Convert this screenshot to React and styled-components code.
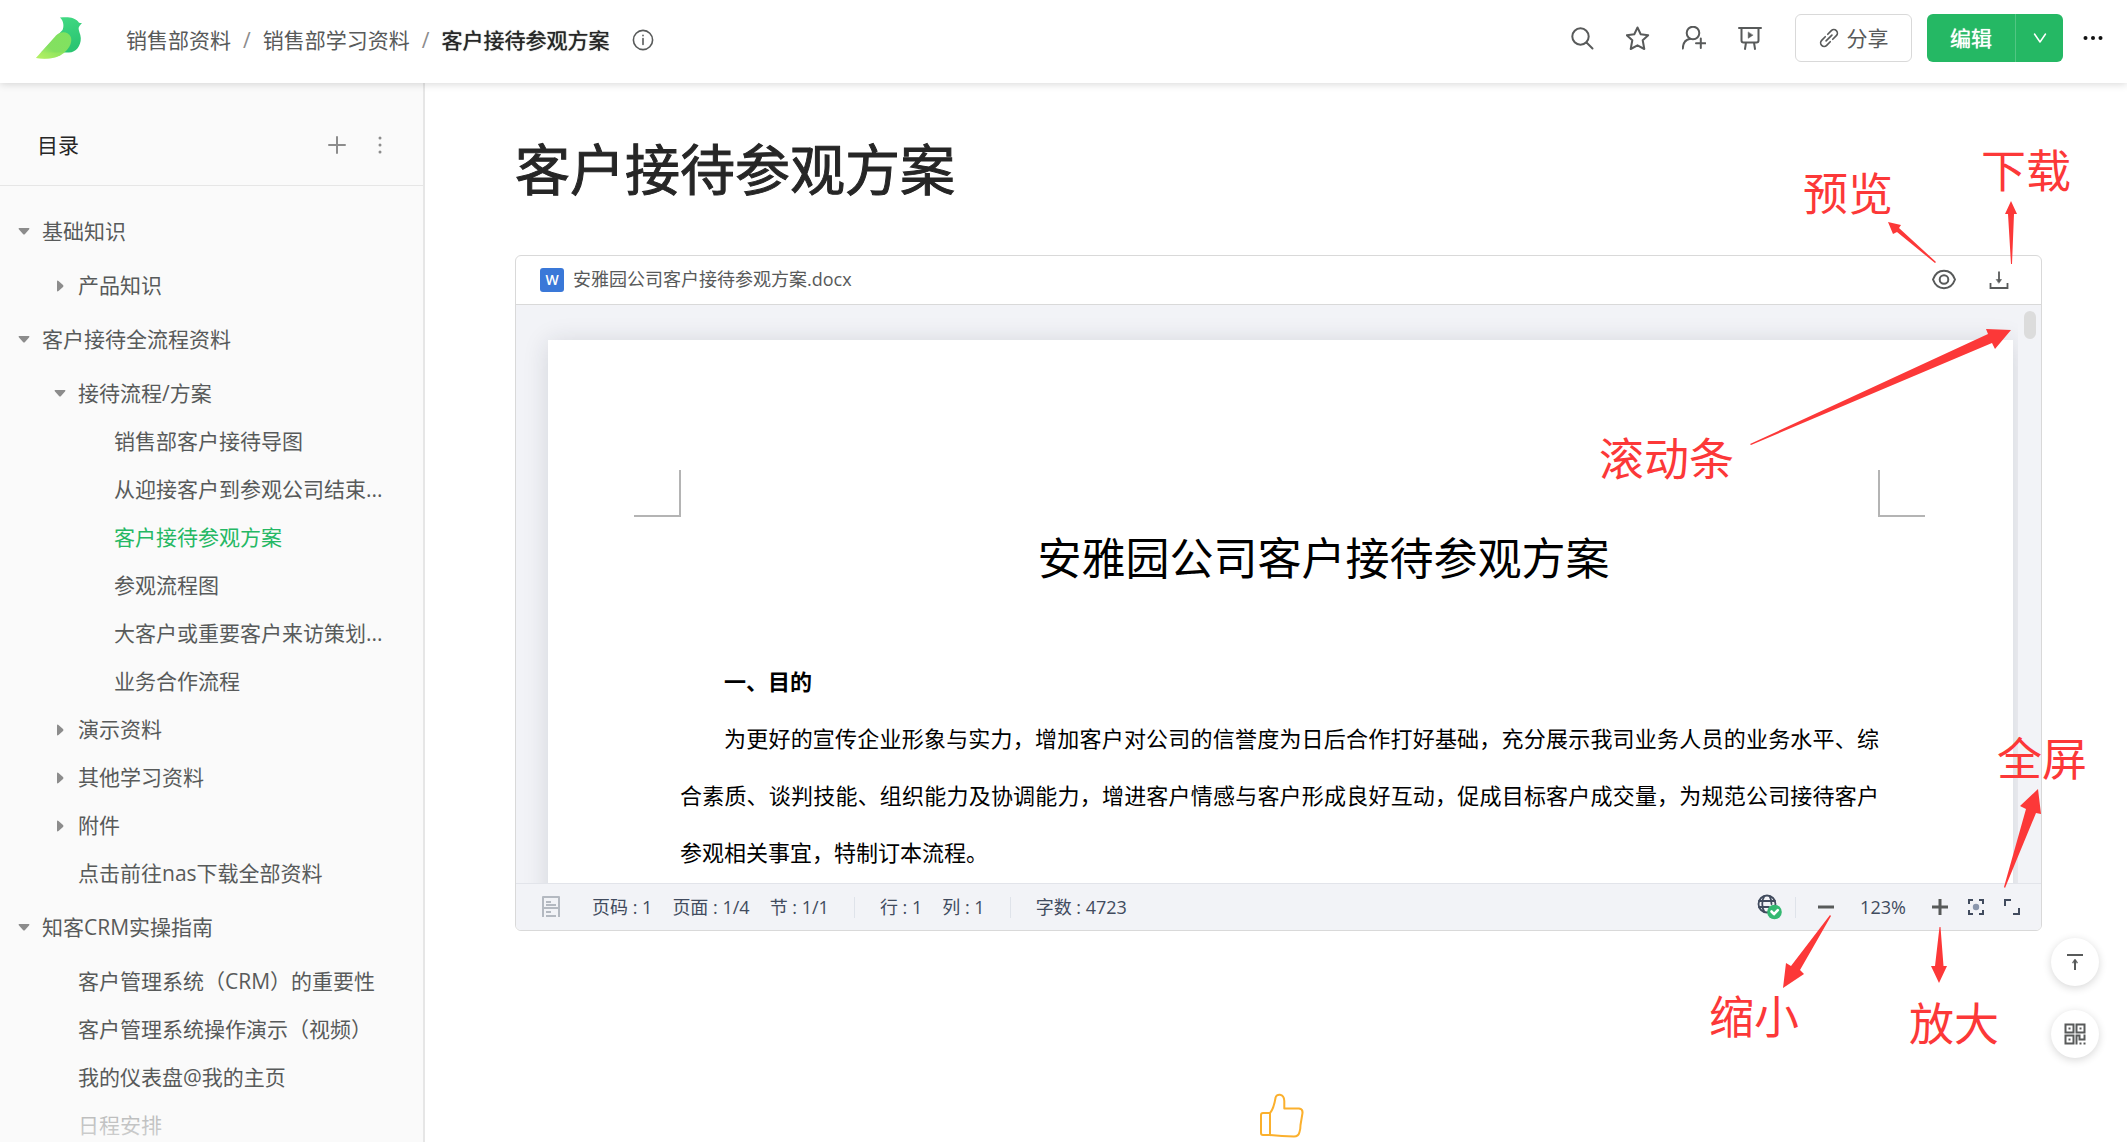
import React from 'react';
import styled, { createGlobalStyle, css } from 'styled-components';

const color = {
  ink: '#262626',
  text: '#585a5a',
  muted: '#8c8c8c',
  line: '#d9d9d9',
  green: '#25b864',
  red: '#fc3838',
  slate: '#414b5e',
  panel: '#f2f3f7',
};

const GlobalStyle = createGlobalStyle`
  *, *::before, *::after { box-sizing: border-box; }
  body {
    margin: 0;
    background: #fff;
    color: ${color.text};
    font-family: "Open Sans", "Noto Sans CJK SC", sans-serif;
    font-size: 21px;
    line-height: 32px;
  }
  a { color: inherit; text-decoration: none; }
  button { font: inherit; color: inherit; background: none; border: 0; padding: 0; cursor: pointer; }
  ul { list-style: none; margin: 0; padding: 0; }
  svg { display: block; flex: none; }
`;

const App = styled.div`
  position: relative;
  display: flex;
  flex-direction: column;
  height: 100vh;
  overflow: hidden;
`;

/* ---------- header ---------- */

const Header = styled.header`
  position: relative;
  z-index: 2;
  flex: none;
  display: flex;
  align-items: center;
  height: 83px;
  padding: 0 22px 7px 36px;
  background: #fff;
  box-shadow: 0 1px 8px rgba(0, 0, 0, 0.16);
`;

const Breadcrumb = styled.nav`
  display: flex;
  align-items: center;
  gap: 12px;
  flex: 1;
  min-width: 0;
  margin-left: 42px;
  padding-top: 3px;
  white-space: nowrap;
`;

const Slash = styled.span`
  color: ${color.muted};
`;

const Current = styled.a`
  margin-right: 10px;
  color: ${color.ink};
  text-shadow: 0 0 1px ${color.ink};
`;

const IconButton = styled.button`
  display: flex;
  align-items: center;
  justify-content: center;
  min-width: 24px;
  height: 24px;
  color: ${(p) => p.$tone || color.text};
`;

const Tools = styled.div`
  display: flex;
  align-items: center;
  gap: 32px;
`;

const ShareButton = styled.button`
  display: flex;
  align-items: center;
  justify-content: center;
  gap: 8px;
  width: 117px;
  height: 48px;
  margin: 0 15px 0 33px;
  border: 1px solid ${color.line};
  border-radius: 6px;
`;

const EditGroup = styled.div`
  display: flex;
  height: 48px;
  margin-right: 18px;
  border-radius: 6px;
  overflow: hidden;
  background: ${color.green};
  color: #fff;
`;

const EditButton = styled.button`
  display: flex;
  align-items: center;
  justify-content: center;
  width: 88px;
  text-shadow: 0 0 1px #fff;
`;

const EditMore = styled(EditButton)`
  width: 48px;
  border-left: 1px solid #51c683;
`;

/* ---------- sidebar ---------- */

const Body = styled.div`
  flex: 1;
  display: flex;
  min-height: 0;
`;

const Sidebar = styled.aside`
  position: relative;
  flex: none;
  width: 425px;
  overflow: hidden;
  background: #fafafa;
  border-right: 2px solid #e6e6e6;

  &::after {
    content: '';
    position: absolute;
    inset: auto 0 0 0;
    height: 50px;
    background: linear-gradient(rgba(250, 250, 250, 0), rgba(250, 250, 250, 0.6) 40%, rgba(250, 250, 250, 0.75));
    pointer-events: none;
  }
`;

const SidebarHead = styled.div`
  display: flex;
  align-items: center;
  gap: 19px;
  height: 103px;
  padding: 22px 31px 0 37px;
  border-bottom: 1px solid #e6e6e6;
`;

const SidebarTitle = styled.h2`
  flex: 1;
  margin: 0;
  color: ${color.ink};
  font-size: 21px;
  font-weight: 400;
`;

const Tree = styled.ul`
  padding: 16px 0 0;
`;

const TreeItem = styled.li`
  display: flex;
  align-items: center;
  height: ${(p) => (p.$level === 0 ? 60 : 48)}px;
  padding-left: ${(p) => 12 + p.$level * 36}px;
  white-space: nowrap;
  ${(p) => p.$active && css`color: ${color.green};`}
`;

const Toggle = styled.button`
  display: flex;
  align-items: center;
  justify-content: center;
  width: 24px;
  height: 24px;
  color: ${color.muted};
`;

const Spacer = styled.span`
  width: 24px;
`;

const TreeLink = styled.a`
  margin-left: 6px;
  padding-bottom: 2px;
`;

/* ---------- article ---------- */

const Main = styled.main`
  flex: 1;
  min-width: 0;
  display: flex;
  flex-direction: column;
  padding: 50px 85px 0 90px;
`;

const Title = styled.h1`
  flex: none;
  margin: 0 0 50px;
  color: ${color.ink};
  font-size: 55px;
  font-weight: 400;
  line-height: 72px;
  -webkit-text-stroke: 1px ${color.ink};
`;

const Card = styled.section`
  flex: none;
  border: 1px solid ${color.line};
  border-radius: 6px;
  overflow: hidden;
`;

const FileBar = styled.div`
  display: flex;
  align-items: center;
  height: 49px;
  padding: 0 30px 0 24px;
  border-bottom: 1px solid ${color.line};
  font-size: 18px;
`;

const WordBadge = styled.span`
  display: flex;
  align-items: center;
  justify-content: center;
  width: 24px;
  height: 24px;
  margin-right: 9px;
  border-radius: 3px;
  background: #3a78d8;
  color: #fff;
  font-size: 14px;
  font-weight: 600;
`;

const FileName = styled.span`
  flex: 1;
  padding-bottom: 2px;
`;

const FileActions = styled.div`
  display: flex;
  gap: 31px;
`;

const Viewer = styled.div`
  display: flex;
  height: 578px;
  background: ${color.panel};
`;

const Canvas = styled.div`
  flex: 1;
  min-width: 0;
  overflow: hidden;
  padding: 35px 5px 0 32px;
`;

const ScrollTrack = styled.div`
  flex: none;
  width: 23px;
  padding: 6px 5px 0 6px;
`;

const ScrollThumb = styled.div`
  height: 28px;
  border-radius: 6px;
  background: #dcdcdc;
`;

const Sheet = styled.article`
  height: 1200px;
  padding: 130px 134px 0 132px;
  background: #fff;
  box-shadow: 0 2px 24px rgba(30, 34, 50, 0.14);
  color: #000;
  font-size: 22px;
  line-height: 57px;
`;

const CropMarks = styled.div`
  display: flex;
  justify-content: space-between;
  margin: 0 -46px;
`;

const CropMark = styled.span`
  width: 47px;
  height: 47px;
  border-bottom: 2px solid #b4b4b4;
  ${(p) => (p.$right ? 'border-left' : 'border-right')}: 2px solid #b4b4b4;
`;

const DocTitle = styled.h2`
  margin: 0 0 54px;
  font-size: 44px;
  font-weight: 400;
  line-height: 82px;
  text-align: center;
  text-indent: 2em;
`;

const DocHeading = styled.h3`
  margin: 0;
  font-size: 22px;
  font-weight: 700;
  text-indent: 2em;
`;

const Paragraph = styled.p`
  margin: 0;
  text-align: justify;
  text-indent: 2em;
`;

const StatusBar = styled.footer`
  display: flex;
  align-items: center;
  gap: 20px;
  height: 47px;
  padding: 0 17px 0 26px;
  border-top: 1px solid #e2e4ea;
  background: ${color.panel};
  color: ${color.slate};
  font-size: 18px;
  white-space: nowrap;
`;

const StatusIcon = styled.button`
  margin-right: 12px;
  color: #b4b9c1;
`;

const Divider = styled.span`
  width: 1px;
  height: 21px;
  margin: 0 5px;
  background: #dfe3ea;
`;

const Zoom = styled.div`
  display: flex;
  align-items: center;
  gap: 12px;
  margin-left: auto;
`;

const ZoomDivider = styled(Divider)`
  margin: 0 6px 0 0;
`;

const Percent = styled.span`
  width: 66px;
  text-align: center;
`;

const Like = styled.button`
  align-self: center;
  margin: 161px 0 0 6px;
`;

const FloatTools = styled.div`
  position: absolute;
  right: 28px;
  bottom: 84px;
  display: flex;
  flex-direction: column;
  gap: 24px;
`;

const RoundButton = styled.button`
  display: flex;
  align-items: center;
  justify-content: center;
  width: 48px;
  height: 48px;
  border-radius: 50%;
  background: #fff;
  box-shadow: 0 2px 9px rgba(0, 0, 0, 0.16);
`;

/* ---------- red guide notes over the page ---------- */

const Guide = styled.div`
  position: absolute;
  z-index: 3;
  top: 0;
  right: 0;
  width: 627px;
  height: 1142px;
  pointer-events: none;
`;

const Note = styled.span`
  position: absolute;
  left: ${(p) => p.$x}px;
  top: ${(p) => p.$y}px;
  color: ${color.red};
  font-size: 45px;
  line-height: 44px;
  white-space: nowrap;
`;

/* ---------- icons ---------- */

const Icon = ({ size = 24, w, h, box, sw = 2, children }) => (
  <svg width={w || size} height={h || size} viewBox={box || `0 0 ${w || size} ${h || size}`} fill="none"
    stroke="currentColor" strokeWidth={sw} strokeLinecap="round" strokeLinejoin="round" aria-hidden="true">
    {children}
  </svg>
);

const Logo = () => (
  <svg width="48" height="42" viewBox="36 18 48 42" aria-hidden="true">
    <defs>
      <linearGradient id="bird" x1="0" y1="0" x2="0.4" y2="1">
        <stop offset="0" stopColor="#46dd86" />
        <stop offset="1" stopColor="#2bc572" />
      </linearGradient>
      <linearGradient id="wing" x1="1" y1="0" x2="0" y2="1">
        <stop offset="0" stopColor="#7fe25f" />
        <stop offset="0.6" stopColor="#84e060" />
        <stop offset="1" stopColor="#c5f56c" />
      </linearGradient>
    </defs>
    <path d="M60 18.5C65 18 70 18 73 19.2C76 20.300 78 22 79 23.800L82 24.200C80.500 25.500 79 27 78.600 29C78.300 31.500 80.600 35 80.800 39C81 47 76 53.300 69 53.500H41L62.500 31C64 28 64 22 60 18.500Z" fill="url(#bird)" />
    <path d="M36 59L56 36.500C61 31.500 68.500 32.500 70.800 38C73 45 67 52.500 60 56.500C53 60 44 60.500 36 59Z" fill="url(#wing)" />
    <path d="M41 53.500H65C56 60 46 60.800 36 59Z" fill="#a9ee60" fillOpacity="0.45" />
  </svg>
);

const InfoIcon = () => (
  <Icon size={22} sw={1.600}>
    <circle cx="11" cy="11" r="9.600" />
    <path d="M11 9.500V15.500M11 6.300V6.800" />
  </Icon>
);

const SearchIcon = () => (
  <Icon><circle cx="10.500" cy="10.500" r="8.200" /><path d="M16.500 16.500L22.500 22.500" /></Icon>
);

const StarIcon = () => (
  <Icon>
    <path d="M11.500 1.500L14.700 8.300L22.200 9.200L16.700 14.300L18.300 23L11.500 19.300L4.700 23L6.300 14.300L0.800 9.200L8.300 8.300Z" />
  </Icon>
);

const UserPlusIcon = () => (
  <Icon><circle cx="11" cy="7" r="6.300" /><path d="M0.800 22.500C1 17 4 13.400 8.300 12.800M18.800 12.500V22M14 17.300H23.500" /></Icon>
);

const PresentIcon = () => (
  <Icon>
    <path d="M1 2H23M3.500 2V14.500Q3.500 16.500 5.500 16.500H18.500Q20.500 16.500 20.500 14.500V2M8 16.500L7 23M16 16.500L17 23" />
    <path d="M10.200 6.300V12.300L14.800 9.300Z" fill="currentColor" strokeWidth="0.500" />
  </Icon>
);

const LinkIcon = () => (
  <Icon size={20} sw={2} box="0 0 24 24">
    <path d="M10.500 7.500L14.800 3.200A4.200 4.200 0 0 1 20.800 9.200L16.500 13.500M13.500 16.500L9.200 20.800A4.200 4.200 0 0 1 3.200 14.800L7.500 10.500M8.500 15.500L15.500 8.500" />
  </Icon>
);

const EyeIcon = () => (
  <Icon>
    <path d="M1 11.500C3 6 7 2.800 12 2.800S21 6 23 11.500C21 17 17 20.200 12 20.200S3 17 1 11.500Z" />
    <circle cx="12" cy="11.500" r="4.300" />
  </Icon>
);

const DownloadIcon = () => (
  <Icon sw={1.800}>
    <path d="M12 3.500V14M3.500 15V20H20.500V15" strokeLinecap="butt" strokeLinejoin="miter" />
    <path d="M9.500 11.500H14.500L12 15Z" fill="currentColor" strokeWidth="0.600" />
  </Icon>
);

const Caret = ({ open }) => (
  <svg width="12" height="12" viewBox="0 0 12 12" fill="currentColor" aria-hidden="true">
    {open
      ? <path d="M1 2H11Q12 2.500 11 3.500L7 8Q6 9 5 8L1 3.500Q0 2.500 1 2Z" />
      : <path d="M3 1.500Q3 0 4.500 1L9 5Q10 6 9 7L4.500 11Q3 12 3 10.500Z" />}
  </svg>
);

const GlobeIcon = () => (
  <Icon size={26} sw={1.800}>
    <circle cx="10" cy="10" r="8.500" />
    <path d="M2 7H18M2 13H12M7.500 2C4.500 6 4.500 14 7.500 18M12.500 2C14 4.500 14.500 7 14.500 10" />
    <circle cx="17.500" cy="18" r="7.300" fill="#34b871" stroke="none" />
    <path d="M14.500 17.500L17 20.200L20.800 16.200" stroke="#fff" strokeWidth="2.600" />
  </Icon>
);

const FocusIcon = () => (
  <Icon size={18} sw={2}>
    <path d="M2 6V2H6M12 2H16V6M16 12V16H12M6 16H2V12" strokeLinecap="butt" strokeLinejoin="miter" />
    <circle cx="9" cy="9" r="3.200" fill="#8b97ad" stroke="none" />
  </Icon>
);

const ExpandIcon = () => (
  <Icon size={18} sw={2}>
    <path d="M2 8V2H8M16 10V16H10" strokeLinecap="butt" strokeLinejoin="miter" />
  </Icon>
);

const QrIcon = () => (
  <Icon size={22} sw={2}>
    <g strokeLinecap="butt" strokeLinejoin="miter">
      <path d="M1.500 1.500H9.500V9.500H1.500ZM12.500 1.500H20.500V9.500H12.500ZM1.500 12.500H9.500V20.500H1.500ZM12.500 21.500V12.500H15.500V16.500H20.500V11.500" />
      <path d="M4.500 5.500H6.500M15.500 5.500H17.500M4.500 16.500H6.500M15.500 20.500H17.500M19.500 20.500H21.500" />
    </g>
  </Icon>
);

const arrows = [
  '1888,222 1901,225 1899,228 1936,262 1935,263 1897,232 1893,234',
  '2011,201 2017,214 2014,214 2012,264 2011,264 2008,214 2005,214',
  '2011,330 1995,349 1992,343 1751,445 1750,444 1988,334 1986,329',
  '2038,789 2041,814 2036,813 2005,888 2004,887 2026,809 2020,806',
  '1783,988 1804,974 1800,970 1831,916 1830,915 1791,966 1786,963',
  '1939,983 1947,966 1943.5,966 1940.5,927 1939.5,927 1935,966 1931,966',
];

const notes = [
  { text: '预览', x: 303, y: 172 },
  { text: '下载', x: 481, y: 149 },
  { text: '滚动条', x: 99, y: 437 },
  { text: '全屏', x: 497, y: 737 },
  { text: '缩小', x: 209, y: 995 },
  { text: '放大', x: 409, y: 1002 },
];

const tree = [
  { level: 0, open: true, text: '基础知识' },
  { level: 1, open: false, text: '产品知识' },
  { level: 0, open: true, text: '客户接待全流程资料' },
  { level: 1, open: true, text: '接待流程/方案' },
  { level: 2, text: '销售部客户接待导图' },
  { level: 2, text: '从迎接客户到参观公司结束...' },
  { level: 2, text: '客户接待参观方案', active: true },
  { level: 2, text: '参观流程图' },
  { level: 2, text: '大客户或重要客户来访策划...' },
  { level: 2, text: '业务合作流程' },
  { level: 1, open: false, text: '演示资料' },
  { level: 1, open: false, text: '其他学习资料' },
  { level: 1, open: false, text: '附件' },
  { level: 1, text: '点击前往nas下载全部资料' },
  { level: 0, open: true, text: '知客CRM实操指南' },
  { level: 1, text: '客户管理系统（CRM）的重要性' },
  { level: 1, text: '客户管理系统操作演示（视频）' },
  { level: 1, text: '我的仪表盘@我的主页' },
  { level: 1, text: '日程安排' },
];

export default function Page() {
  return (
    <App>
      <GlobalStyle />
      <Header>
        <a href="#home" aria-label="首页"><Logo /></a>
        <Breadcrumb aria-label="路径">
          <a href="#sales">销售部资料</a>
          <Slash>/</Slash>
          <a href="#study">销售部学习资料</a>
          <Slash>/</Slash>
          <Current href="#doc" aria-current="page">客户接待参观方案</Current>
          <IconButton aria-label="信息"><InfoIcon /></IconButton>
        </Breadcrumb>
        <Tools>
          <IconButton aria-label="搜索"><SearchIcon /></IconButton>
          <IconButton aria-label="收藏"><StarIcon /></IconButton>
          <IconButton aria-label="邀请成员"><UserPlusIcon /></IconButton>
          <IconButton aria-label="演示"><PresentIcon /></IconButton>
        </Tools>
        <ShareButton><LinkIcon />分享</ShareButton>
        <EditGroup>
          <EditButton>编辑</EditButton>
          <EditMore aria-label="更多编辑方式">
            <Icon w={14} h={12} sw={1.500}><path d="M1.500 2L7 10L12.500 2" /></Icon>
          </EditMore>
        </EditGroup>
        <IconButton aria-label="更多" $tone="#111">
          <svg width="24" height="6" viewBox="0 0 24 6" fill="currentColor" aria-hidden="true">
            <circle cx="4.500" cy="3" r="2" /><circle cx="12" cy="3" r="2" /><circle cx="19.500" cy="3" r="2" />
          </svg>
        </IconButton>
      </Header>

      <Body>
        <Sidebar>
          <SidebarHead>
            <SidebarTitle>目录</SidebarTitle>
            <IconButton aria-label="新建" $tone={color.muted}>
              <Icon size={18} sw={2}><path d="M9 1V17M1 9H17" /></Icon>
            </IconButton>
            <IconButton aria-label="目录菜单" $tone={color.muted}>
              <svg width="4" height="18" viewBox="0 0 4 18" fill="currentColor" aria-hidden="true">
                <circle cx="2" cy="2" r="1.500" /><circle cx="2" cy="9" r="1.500" /><circle cx="2" cy="16" r="1.500" />
              </svg>
            </IconButton>
          </SidebarHead>
          <Tree>
            {tree.map((item) => (
              <TreeItem key={item.text} $level={item.level} $active={item.active}>
                {item.open === undefined
                  ? <Spacer />
                  : <Toggle aria-label={item.open ? '收起' : '展开'} aria-expanded={item.open}><Caret open={item.open} /></Toggle>}
                <TreeLink href="#doc">{item.text}</TreeLink>
              </TreeItem>
            ))}
          </Tree>
        </Sidebar>

        <Main>
          <Title>客户接待参观方案</Title>
          <Card>
            <FileBar>
              <WordBadge>W</WordBadge>
              <FileName>安雅园公司客户接待参观方案.docx</FileName>
              <FileActions>
                <IconButton aria-label="预览"><EyeIcon /></IconButton>
                <IconButton aria-label="下载"><DownloadIcon /></IconButton>
              </FileActions>
            </FileBar>
            <Viewer>
              <Canvas>
                <Sheet>
                  <CropMarks><CropMark /><CropMark $right /></CropMarks>
                  <DocTitle>安雅园公司客户接待参观方案</DocTitle>
                  <DocHeading>一、目的</DocHeading>
                  <Paragraph>
                    为更好的宣传企业形象与实力，增加客户对公司的信誉度为日后合作打好基础，充分展示我司业务人员的业务水平、综合素质、谈判技能、组织能力及协调能力，增进客户情感与客户形成良好互动，促成目标客户成交量，为规范公司接待客户参观相关事宜，特制订本流程。
                  </Paragraph>
                </Sheet>
              </Canvas>
              <ScrollTrack><ScrollThumb /></ScrollTrack>
            </Viewer>
            <StatusBar>
              <StatusIcon aria-label="目录导航">
                <Icon w={18} h={24} sw={2}>
                  <path d="M1 22V2H17V22M1 13H17M4 7H9M4 10H14M4 17H9M4 21H14" strokeLinecap="butt" />
                </Icon>
              </StatusIcon>
              <span>页码 : 1</span>
              <span>页面 : 1/4</span>
              <span>节 : 1/1</span>
              <Divider />
              <span>行 : 1</span>
              <span>列 : 1</span>
              <Divider />
              <span>字数 : 4723</span>
              <Zoom>
                <IconButton aria-label="拼写检查" $tone={color.slate}><GlobeIcon /></IconButton>
                <ZoomDivider />
                <IconButton aria-label="缩小"><Icon size={18} sw={3}><path d="M1 9H17" strokeLinecap="butt" /></Icon></IconButton>
                <Percent>123%</Percent>
                <IconButton aria-label="放大"><Icon size={18} sw={3}><path d="M1 9H17M9 1V17" strokeLinecap="butt" /></Icon></IconButton>
                <IconButton aria-label="适合页面" $tone={color.slate}><FocusIcon /></IconButton>
                <IconButton aria-label="全屏" $tone={color.slate}><ExpandIcon /></IconButton>
              </Zoom>
            </StatusBar>
          </Card>
          <Like aria-label="点赞">
            <svg width="46" height="46" viewBox="0 0 46 46" fill="none" stroke="#fbb02d" strokeWidth="2" strokeLinejoin="round" aria-hidden="true">
              <path d="M4 21H11V43H4Q2 43 2 41V23Q2 21 4 21Z" />
              <path d="M11 21C14.500 17 15.500 12 16.500 6C17 1.500 25 1 25.300 9V16.500H40Q44 17 43.500 21Q43 24 42.500 27Q42 30 41.500 33Q41.500 37 40.500 40Q39.500 44.500 35 44.500Q23 44.500 11 43" />
            </svg>
          </Like>
        </Main>
      </Body>

      <FloatTools>
        <RoundButton aria-label="回到顶部">
          <Icon size={20} sw={2}>
            <path d="M2 3H18M10 18V8" strokeLinecap="butt" />
            <path d="M7.500 10.500L10 7L12.500 10.500Z" fill="currentColor" strokeWidth="0.600" />
          </Icon>
        </RoundButton>
        <RoundButton aria-label="二维码"><QrIcon /></RoundButton>
      </FloatTools>

      <Guide>
        <svg width="627" height="1142" viewBox="1500 0 627 1142" fill={color.red} aria-hidden="true">
          {arrows.map((points) => <polygon key={points} points={points} />)}
        </svg>
        {notes.map((note) => <Note key={note.text} $x={note.x} $y={note.y}>{note.text}</Note>)}
      </Guide>
    </App>
  );
}
